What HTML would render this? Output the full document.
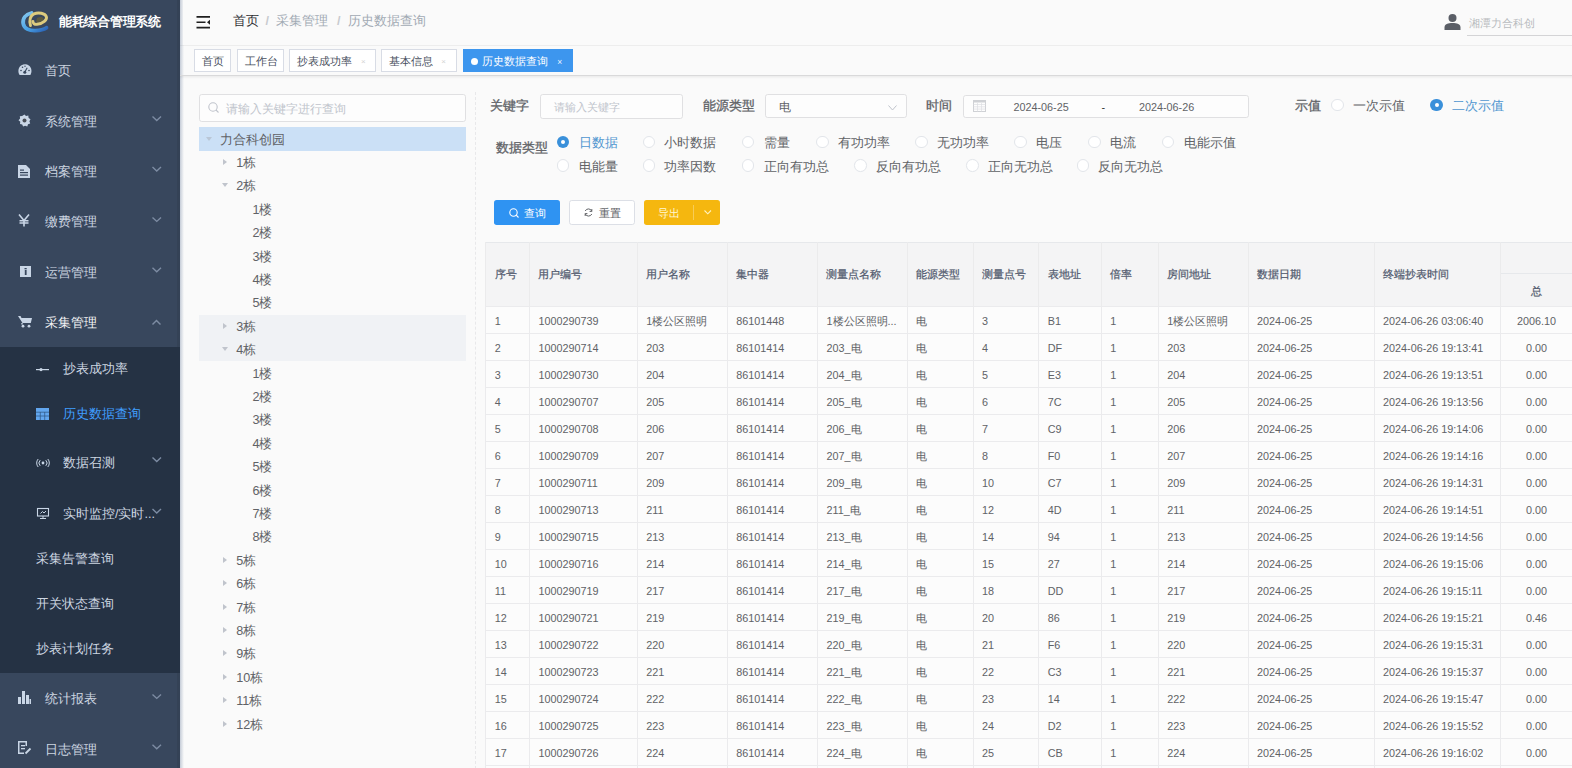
<!DOCTYPE html>
<html><head><meta charset="utf-8"><title>历史数据查询</title>
<style>
*{box-sizing:border-box;margin:0;padding:0}
html,body{width:1572px;height:768px;overflow:hidden;background:#fafafa;font-family:'Liberation Sans', sans-serif}
.t{position:absolute;white-space:nowrap;line-height:20px}
.r{position:absolute}
svg{position:absolute;overflow:visible}
</style></head>
<body>
<div class="r" style="left:0px;top:0px;width:180px;height:768px;background:#38475d"></div>
<div class="r" style="left:0px;top:346.8px;width:180px;height:326.5px;background:#253244"></div>
<div class="r" style="left:177px;top:0px;width:3px;height:346.8px;background:rgba(0,0,0,.07)"></div>
<div class="r" style="left:177px;top:673.3px;width:3px;height:95px;background:rgba(0,0,0,.07)"></div>
<div class="r" style="left:180px;top:0px;width:4px;height:768px;background:linear-gradient(to right,rgba(60,85,125,.28),rgba(60,85,125,0))"></div>
<svg style="left:0;top:0" width="60" height="40" viewBox="0 0 60 40">
<defs><linearGradient id="lg1" x1="0" y1="0" x2="1" y2="1"><stop offset="0" stop-color="#86c8ee"/><stop offset=".55" stop-color="#4aa2e4"/><stop offset="1" stop-color="#2a62b5"/></linearGradient></defs>
<path d="M31.5 13 C25.5 14.5 22.5 18.5 23.2 23.5 C24 28.5 29.5 31 35.5 30.6 C40 30.3 44 29.3 46.5 27.8" fill="none" stroke="url(#lg1)" stroke-width="3.8" stroke-linecap="round"/>
<path d="M37 18 C40 16.5 43 17 43.5 18.5 C44 20.5 40 22.5 36 22.5 Z" fill="#5c5a3c"/>
<path d="M30.5 25.5 C29 21 30 15.5 34 13.8 C38.5 12 45 13.2 46.3 16.5 C47.5 19.8 43 23.8 37 24.3 C34.5 24.5 32.8 23.5 33 21.5" fill="none" stroke="#dccb7e" stroke-width="2.9" stroke-linecap="round"/>
</svg>
<div class="t" style="left:59px;top:12.00px;font-size:12.6px;color:#ffffff;font-weight:bold;letter-spacing:-0.3px">能耗综合管理系统</div>
<div class="t" style="left:45px;top:61.20px;font-size:12.6px;color:#cdd6e1;font-weight:normal;">首页</div>
<div class="t" style="left:45px;top:111.60px;font-size:12.6px;color:#cdd6e1;font-weight:normal;">系统管理</div>
<svg style="left:0;top:0" width="1" height="1"><path d="M152.5 116.6 L156.75 120.6 L161 116.6" fill="none" stroke="#7d8ca3" stroke-width="1.4"/></svg>
<div class="t" style="left:45px;top:162.00px;font-size:12.6px;color:#cdd6e1;font-weight:normal;">档案管理</div>
<svg style="left:0;top:0" width="1" height="1"><path d="M152.5 167 L156.75 171 L161 167" fill="none" stroke="#7d8ca3" stroke-width="1.4"/></svg>
<div class="t" style="left:45px;top:212.40px;font-size:12.6px;color:#cdd6e1;font-weight:normal;">缴费管理</div>
<svg style="left:0;top:0" width="1" height="1"><path d="M152.5 217.4 L156.75 221.4 L161 217.4" fill="none" stroke="#7d8ca3" stroke-width="1.4"/></svg>
<div class="t" style="left:45px;top:262.80px;font-size:12.6px;color:#cdd6e1;font-weight:normal;">运营管理</div>
<svg style="left:0;top:0" width="1" height="1"><path d="M152.5 267.8 L156.75 271.8 L161 267.8" fill="none" stroke="#7d8ca3" stroke-width="1.4"/></svg>
<div class="t" style="left:45px;top:313.20px;font-size:12.6px;color:#f4f4f5;font-weight:normal;">采集管理</div>
<svg style="left:0;top:0" width="1" height="1"><path d="M152.5 324.5 L156.5 320.4 L160.5 324.5" fill="none" stroke="#7d8ca3" stroke-width="1.4"/></svg>
<div class="t" style="left:45px;top:689.40px;font-size:12.6px;color:#cdd6e1;font-weight:normal;">统计报表</div>
<svg style="left:0;top:0" width="1" height="1"><path d="M152.5 694.4 L156.75 698.4 L161 694.4" fill="none" stroke="#7d8ca3" stroke-width="1.4"/></svg>
<div class="t" style="left:45px;top:739.80px;font-size:12.6px;color:#cdd6e1;font-weight:normal;">日志管理</div>
<svg style="left:0;top:0" width="1" height="1"><path d="M152.5 744.8 L156.75 748.8 L161 744.8" fill="none" stroke="#7d8ca3" stroke-width="1.4"/></svg>
<div class="t" style="left:63px;top:359.40px;font-size:12.6px;color:#cdd6e1;font-weight:normal;">抄表成功率</div>
<div class="t" style="left:63px;top:404.40px;font-size:12.6px;color:#409EFF;font-weight:normal;">历史数据查询</div>
<div class="t" style="left:63px;top:452.60px;font-size:12.6px;color:#cdd6e1;font-weight:normal;">数据召测</div>
<svg style="left:0;top:0" width="1" height="1"><path d="M152.5 457.6 L156.75 461.6 L161 457.6" fill="none" stroke="#7d8ca3" stroke-width="1.4"/></svg>
<div class="t" style="left:63px;top:504.00px;font-size:12.6px;color:#cdd6e1;font-weight:normal;">实时监控/实时...</div>
<svg style="left:0;top:0" width="1" height="1"><path d="M152.5 509 L156.75 513 L161 509" fill="none" stroke="#7d8ca3" stroke-width="1.4"/></svg>
<div class="t" style="left:35.5px;top:549.40px;font-size:12.6px;color:#cdd6e1;font-weight:normal;">采集告警查询</div>
<div class="t" style="left:35.5px;top:594.40px;font-size:12.6px;color:#cdd6e1;font-weight:normal;">开关状态查询</div>
<div class="t" style="left:35.5px;top:639.40px;font-size:12.6px;color:#cdd6e1;font-weight:normal;">抄表计划任务</div>
<svg style="left:17.5px;top:63.5px" width="14" height="12" viewBox="0 0 14 12">
<path d="M1.6 11 C-0.5 8 0.3 3 3.5 1.3 C5.8 0 8.8 0 10.8 1.5 C13.8 3.5 14.3 8 12.4 11 Z" fill="#c9d6e6"/>
<circle cx="6.8" cy="8.2" r="1.5" fill="#38475d"/><path d="M6.8 8 L9.2 3.8" stroke="#38475d" stroke-width="1.1"/>
<circle cx="3" cy="6.5" r=".8" fill="#38475d"/><circle cx="4.5" cy="3.3" r=".8" fill="#38475d"/><circle cx="11" cy="6.5" r=".8" fill="#38475d"/><circle cx="7" cy="2.3" r=".7" fill="#38475d"/>
</svg>
<svg style="left:17.5px;top:113.5px" width="13" height="13" viewBox="0 0 13 13">
<path d="M6.5 0.5 L8 2 L10.3 1.6 L10.6 3.9 L12.5 5.3 L11.4 7.3 L12.2 9.5 L10 10.3 L9.3 12.5 L7.1 11.7 L5.1 12.6 L4.2 10.4 L2 10 L2.3 7.7 L0.5 6.2 L2.1 4.6 L1.8 2.3 L4.1 2.1 Z" fill="#c9d6e6"/>
<circle cx="6.5" cy="6.5" r="2" fill="#4a4f57"/>
</svg>
<svg style="left:18px;top:164.5px" width="12" height="13" viewBox="0 0 12 13">
<path d="M0 0 H8 L12 4 V13 H0 Z" fill="#c9d6e6"/>
<rect x="2" y="7" width="8" height="1.2" fill="#38475d"/><rect x="2" y="9.5" width="8" height="1.2" fill="#38475d"/><rect x="2" y="4.5" width="4" height="1.2" fill="#38475d"/>
</svg>
<svg style="left:18px;top:214px" width="12" height="13" viewBox="0 0 12 13">
<path d="M1 0.5 L6 6.5 L11 0.5 M6 6.5 V12.5 M1.5 6.8 H10.5 M1.5 9 H10.5" fill="none" stroke="#c9d6e6" stroke-width="1.6"/>
</svg>
<svg style="left:19.5px;top:266px" width="11" height="11" viewBox="0 0 11 11">
<rect x="0" y="0" width="11" height="11" fill="#c9d6e6"/>
<rect x="4.5" y="2" width="2.2" height="1.3" fill="#38475d"/><rect x="4.8" y="4" width="1.8" height="5" fill="#38475d"/>
</svg>
<svg style="left:17.5px;top:315px" width="14" height="13" viewBox="0 0 14 13">
<path d="M0 1 H2.5 L3.5 3 H14 L12.8 8 H4.5 Z" fill="#c9d6e6"/><rect x="3.3" y="8" width="1.4" height="1.5" fill="#c9d6e6"/>
<circle cx="5" cy="11.2" r="1.4" fill="#c9d6e6"/><circle cx="11" cy="11.2" r="1.4" fill="#c9d6e6"/>
</svg>
<svg style="left:18px;top:690.5px" width="13" height="13" viewBox="0 0 13 13">
<rect x="0" y="6" width="3" height="7" fill="#c9d6e6"/><rect x="4" y="0" width="3" height="13" fill="#c9d6e6"/><rect x="8" y="4" width="3" height="9" fill="#c9d6e6"/><rect x="11.5" y="8" width="1.5" height="5" fill="#c9d6e6"/>
</svg>
<svg style="left:18px;top:741px" width="13" height="13" viewBox="0 0 13 13">
<path d="M0 0 H9 V5 H7.5 V1.5 H1.5 V11.5 H6 V13 H0 Z" fill="#c9d6e6"/><rect x="3" y="4" width="4" height="1.3" fill="#c9d6e6"/><rect x="3" y="7" width="4" height="1.3" fill="#c9d6e6"/>
<path d="M7.5 12.5 L12.5 7.5" stroke="#c9d6e6" stroke-width="1.8"/>
</svg>
<svg style="left:36px;top:366.5px" width="13" height="5" viewBox="0 0 13 5">
<rect x="0" y="2" width="13" height="1.2" fill="#c9d6e6"/><circle cx="5" cy="2.6" r="1.6" fill="#c9d6e6"/>
</svg>
<svg style="left:35.8px;top:408px" width="13" height="12" viewBox="0 0 13 12">
<rect x="0" y="0" width="13" height="12" fill="#62a6ee"/>
<path d="M0 4.2 H13 M0 8 H13 M4.3 4 V12 M8.7 4 V12" stroke="#2f5580" stroke-width=".7"/>
</svg>
<svg style="left:36.5px;top:458.5px" width="12" height="8" viewBox="0 0 12 8">
<circle cx="6" cy="4" r="1.4" fill="#c9d6e6"/>
<path d="M3.2 1.2 A4 4 0 0 0 3.2 6.8 M8.8 1.2 A4 4 0 0 1 8.8 6.8 M1.2 0 A6 6 0 0 0 1.2 8 M10.8 0 A6 6 0 0 1 10.8 8" fill="none" stroke="#c9d6e6" stroke-width="1"/>
</svg>
<svg style="left:36.5px;top:507.5px" width="12" height="11" viewBox="0 0 12 11">
<rect x=".5" y=".5" width="11" height="7.5" fill="none" stroke="#c9d6e6" stroke-width="1.1"/>
<path d="M3 10.5 H9 M6 8 V10.5 M3.5 5.5 L5.5 3.5 L7 5 L9 3" fill="none" stroke="#c9d6e6" stroke-width="1"/>
</svg>
<div class="r" style="left:183px;top:0px;width:1389px;height:45px;background:#fafafa"></div>
<div class="r" style="left:180px;top:44.8px;width:1392px;height:1.5px;background:rgba(0,0,0,.05)"></div>
<svg style="left:195.5px;top:15.5px" width="15" height="13" viewBox="0 0 15 13">
<path d="M.5 .9 H14 M.5 6.3 H9.5 M.5 11.6 H14" stroke="#1f1f1f" stroke-width="1.6"/>
<path d="M14 3.8 L11 6.3 L14 8.8 Z" fill="#1f1f1f"/>
</svg>
<div class="t" style="left:233px;top:11.30px;font-size:12.6px;color:#303133;font-weight:normal;">首页</div>
<div class="t" style="left:265.5px;top:11.30px;font-size:12.6px;color:#c8cacf;font-weight:bold;">/</div>
<div class="t" style="left:276px;top:11.30px;font-size:12.6px;color:#a2aab4;font-weight:normal;">采集管理</div>
<div class="t" style="left:337px;top:11.30px;font-size:12.6px;color:#c8cacf;font-weight:bold;">/</div>
<div class="t" style="left:347.5px;top:11.30px;font-size:12.6px;color:#a2aab4;font-weight:normal;">历史数据查询</div>
<svg style="left:1444px;top:14px" width="17" height="16" viewBox="0 0 17 16">
<ellipse cx="8.5" cy="4" rx="4" ry="4" fill="#5a5e66"/>
<path d="M0.5 16 V13.5 C0.5 10 4 9 8.5 9 C13 9 16.5 10 16.5 13.5 V16 Z" fill="#5a5e66"/>
</svg>
<div class="t" style="left:1469px;top:13.00px;font-size:10.8px;color:#b8babe;font-weight:normal;">湘潭力合科创</div>
<div class="r" style="left:1467px;top:35px;width:105px;height:1px;background:#d4d4d6"></div>
<div class="r" style="left:180px;top:75px;width:1392px;height:1.2px;background:#d9d9da"></div>
<div class="r" style="left:180px;top:76.2px;width:1392px;height:2.5px;background:linear-gradient(rgba(0,0,0,.06),rgba(0,0,0,0))"></div>
<div class="r" style="left:194px;top:49px;width:36.5px;height:23px;background:#fff;border:1px solid #d8dce5"></div>
<div class="t" style="left:202px;top:51.30px;font-size:10.8px;color:#495060;font-weight:normal;">首页</div>
<div class="r" style="left:236.5px;top:49px;width:47.89999999999998px;height:23px;background:#fff;border:1px solid #d8dce5"></div>
<div class="t" style="left:244.5px;top:51.30px;font-size:10.8px;color:#495060;font-weight:normal;">工作台</div>
<div class="r" style="left:289.4px;top:49px;width:87.10000000000002px;height:23px;background:#fff;border:1px solid #d8dce5"></div>
<div class="t" style="left:297.4px;top:51.30px;font-size:10.8px;color:#495060;font-weight:normal;">抄表成功率</div>
<div class="t" style="left:361.0px;top:52.00px;font-size:8px;color:#d4d4d4;font-weight:normal;">×</div>
<div class="r" style="left:381.3px;top:49px;width:75.5px;height:23px;background:#fff;border:1px solid #d8dce5"></div>
<div class="t" style="left:389.3px;top:51.30px;font-size:10.8px;color:#495060;font-weight:normal;">基本信息</div>
<div class="t" style="left:441.3px;top:52.00px;font-size:8px;color:#d4d4d4;font-weight:normal;">×</div>
<div class="r" style="left:463.2px;top:49px;width:109.59999999999997px;height:23px;background:#3d96ee;border:1px solid #3d96ee"></div>
<div class="r" style="left:471.2px;top:57.5px;width:7px;height:7px;background:#fff;border-radius:50%"></div>
<div class="t" style="left:482.2px;top:51.30px;font-size:10.8px;color:#fff;font-weight:normal;">历史数据查询</div>
<div class="t" style="left:557.3px;top:52.00px;font-size:8.5px;color:#e8f3ff;font-weight:normal;">×</div>
<div class="r" style="left:198.5px;top:94px;width:267px;height:28px;background:#fdfdfd;border:1px solid #e0e0e2;border-radius:2.7px"></div>
<svg style="left:208px;top:102px" width="11" height="11" viewBox="0 0 11 11">
<circle cx="5" cy="5" r="4.2" fill="none" stroke="#c0c4cc" stroke-width="1.1"/><path d="M8 8 L10.5 10.5" stroke="#c0c4cc" stroke-width="1.1"/>
</svg>
<div class="t" style="left:225.5px;top:98.50px;font-size:11.7px;color:#c0c4cc;font-weight:normal;">请输入关键字进行查询</div>
<div class="r" style="left:198.5px;top:127.3px;width:267px;height:23.4px;background:#cbe0f6"></div>
<div class="r" style="left:198.5px;top:314.5px;width:267px;height:46.8px;background:#f0f2f5"></div>
<svg style="left:206.0px;top:136.5px" width="6" height="4"><path d="M0 0 H6 L3 4 Z" fill="#b9c6d6"/></svg>
<div class="t" style="left:220.0px;top:129.50px;font-size:12.6px;color:#606266;font-weight:normal;">力合科创园</div>
<svg style="left:223.2px;top:158.89999999999998px" width="4" height="6"><path d="M0 0 V6 L4 3 Z" fill="#c0c4cc"/></svg>
<div class="t" style="left:236.2px;top:152.90px;font-size:12.6px;color:#606266;font-weight:normal;">1栋</div>
<svg style="left:222.2px;top:183.29999999999998px" width="6" height="4"><path d="M0 0 H6 L3 4 Z" fill="#c0c4cc"/></svg>
<div class="t" style="left:236.2px;top:176.30px;font-size:12.6px;color:#606266;font-weight:normal;">2栋</div>
<div class="t" style="left:252.4px;top:199.70px;font-size:12.6px;color:#606266;font-weight:normal;">1楼</div>
<div class="t" style="left:252.4px;top:223.10px;font-size:12.6px;color:#606266;font-weight:normal;">2楼</div>
<div class="t" style="left:252.4px;top:246.50px;font-size:12.6px;color:#606266;font-weight:normal;">3楼</div>
<div class="t" style="left:252.4px;top:269.90px;font-size:12.6px;color:#606266;font-weight:normal;">4楼</div>
<div class="t" style="left:252.4px;top:293.30px;font-size:12.6px;color:#606266;font-weight:normal;">5楼</div>
<svg style="left:223.2px;top:322.7px" width="4" height="6"><path d="M0 0 V6 L4 3 Z" fill="#c0c4cc"/></svg>
<div class="t" style="left:236.2px;top:316.70px;font-size:12.6px;color:#606266;font-weight:normal;">3栋</div>
<svg style="left:222.2px;top:347.09999999999997px" width="6" height="4"><path d="M0 0 H6 L3 4 Z" fill="#c0c4cc"/></svg>
<div class="t" style="left:236.2px;top:340.10px;font-size:12.6px;color:#606266;font-weight:normal;">4栋</div>
<div class="t" style="left:252.4px;top:363.50px;font-size:12.6px;color:#606266;font-weight:normal;">1楼</div>
<div class="t" style="left:252.4px;top:386.90px;font-size:12.6px;color:#606266;font-weight:normal;">2楼</div>
<div class="t" style="left:252.4px;top:410.30px;font-size:12.6px;color:#606266;font-weight:normal;">3楼</div>
<div class="t" style="left:252.4px;top:433.70px;font-size:12.6px;color:#606266;font-weight:normal;">4楼</div>
<div class="t" style="left:252.4px;top:457.10px;font-size:12.6px;color:#606266;font-weight:normal;">5楼</div>
<div class="t" style="left:252.4px;top:480.50px;font-size:12.6px;color:#606266;font-weight:normal;">6楼</div>
<div class="t" style="left:252.4px;top:503.90px;font-size:12.6px;color:#606266;font-weight:normal;">7楼</div>
<div class="t" style="left:252.4px;top:527.30px;font-size:12.6px;color:#606266;font-weight:normal;">8楼</div>
<svg style="left:223.2px;top:556.7px" width="4" height="6"><path d="M0 0 V6 L4 3 Z" fill="#c0c4cc"/></svg>
<div class="t" style="left:236.2px;top:550.70px;font-size:12.6px;color:#606266;font-weight:normal;">5栋</div>
<svg style="left:223.2px;top:580.1px" width="4" height="6"><path d="M0 0 V6 L4 3 Z" fill="#c0c4cc"/></svg>
<div class="t" style="left:236.2px;top:574.10px;font-size:12.6px;color:#606266;font-weight:normal;">6栋</div>
<svg style="left:223.2px;top:603.5px" width="4" height="6"><path d="M0 0 V6 L4 3 Z" fill="#c0c4cc"/></svg>
<div class="t" style="left:236.2px;top:597.50px;font-size:12.6px;color:#606266;font-weight:normal;">7栋</div>
<svg style="left:223.2px;top:626.9px" width="4" height="6"><path d="M0 0 V6 L4 3 Z" fill="#c0c4cc"/></svg>
<div class="t" style="left:236.2px;top:620.90px;font-size:12.6px;color:#606266;font-weight:normal;">8栋</div>
<svg style="left:223.2px;top:650.3px" width="4" height="6"><path d="M0 0 V6 L4 3 Z" fill="#c0c4cc"/></svg>
<div class="t" style="left:236.2px;top:644.30px;font-size:12.6px;color:#606266;font-weight:normal;">9栋</div>
<svg style="left:223.2px;top:673.6999999999999px" width="4" height="6"><path d="M0 0 V6 L4 3 Z" fill="#c0c4cc"/></svg>
<div class="t" style="left:236.2px;top:667.70px;font-size:12.6px;color:#606266;font-weight:normal;">10栋</div>
<svg style="left:223.2px;top:697.0999999999999px" width="4" height="6"><path d="M0 0 V6 L4 3 Z" fill="#c0c4cc"/></svg>
<div class="t" style="left:236.2px;top:691.10px;font-size:12.6px;color:#606266;font-weight:normal;">11栋</div>
<svg style="left:223.2px;top:720.5px" width="4" height="6"><path d="M0 0 V6 L4 3 Z" fill="#c0c4cc"/></svg>
<div class="t" style="left:236.2px;top:714.50px;font-size:12.6px;color:#606266;font-weight:normal;">12栋</div>
<div class="r" style="left:475px;top:91.5px;width:0;height:677px;border-left:1px dashed #e8e8ea"></div>
<div class="t" style="left:490px;top:96.30px;font-size:12.6px;color:#606266;font-weight:normal;-webkit-text-stroke:0.3px #606266">关键字</div>
<div class="r" style="left:539.5px;top:94.2px;width:143.2px;height:24.4px;background:#fdfdfd;border:1px solid #e0e0e2;border-radius:2.7px"></div>
<div class="t" style="left:553.5px;top:96.50px;font-size:10.9px;color:#c0c4cc;font-weight:normal;">请输入关键字</div>
<div class="t" style="left:702.9px;top:96.20px;font-size:12.6px;color:#606266;font-weight:normal;-webkit-text-stroke:0.3px #606266">能源类型</div>
<div class="r" style="left:764.7px;top:94.4px;width:142.6px;height:23.8px;background:#fdfdfd;border:1px solid #e0e0e2;border-radius:2.7px"></div>
<div class="t" style="left:778.5px;top:97.00px;font-size:11.7px;color:#606266;font-weight:normal;">电</div>
<svg style="left:887.5px;top:105px" width="10" height="6"><path d="M.5 .5 L4.5 5 L8.5 .5" fill="none" stroke="#c0c4cc" stroke-width="1"/></svg>
<div class="t" style="left:926px;top:96.20px;font-size:12.6px;color:#606266;font-weight:normal;-webkit-text-stroke:0.3px #606266">时间</div>
<div class="r" style="left:962.8px;top:94.5px;width:286.6px;height:23.6px;background:#fdfdfd;border:1px solid #e0e0e2;border-radius:2.7px"></div>
<svg style="left:972.5px;top:99.5px" width="13" height="12" viewBox="0 0 13 12">
<rect x=".5" y=".5" width="12" height="11" fill="none" stroke="#cfd1d5" stroke-width="1"/><rect x=".5" y=".5" width="12" height="2" fill="#cfd1d5"/>
<path d="M.5 4.5 H12.5 M.5 6.8 H12.5 M.5 9.1 H12.5 M4.5 3 V11.5 M8.5 3 V11.5" stroke="#dcdee2" stroke-width=".7"/>
</svg>
<div class="t" style="left:1013.5px;top:96.50px;font-size:10.8px;color:#606266;font-weight:normal;">2024-06-25</div>
<div class="t" style="left:1101.5px;top:96.50px;font-size:10.8px;color:#303133;font-weight:normal;">-</div>
<div class="t" style="left:1139px;top:96.50px;font-size:10.8px;color:#606266;font-weight:normal;">2024-06-26</div>
<div class="t" style="left:1295.3px;top:96.20px;font-size:12.6px;color:#606266;font-weight:normal;-webkit-text-stroke:0.3px #606266">示值</div>
<div class="r" style="left:1331px;top:98.5px;width:12.6px;height:12.6px;border-radius:50%;background:#fff;border:1px solid #e2e5ea"></div>
<div class="t" style="left:1352.8px;top:95.80px;font-size:12.6px;color:#606266;font-weight:normal;">一次示值</div>
<div class="r" style="left:1430.4px;top:98.5px;width:12.6px;height:12.6px;border-radius:50%;background:#3a90da"></div>
<div class="r" style="left:1434.7px;top:102.8px;width:4px;height:4px;border-radius:50%;background:#fff"></div>
<div class="t" style="left:1452.2px;top:95.80px;font-size:12.6px;color:#5096d0;font-weight:normal;">二次示值</div>
<div class="t" style="left:496px;top:137.70px;font-size:12.6px;color:#606266;font-weight:normal;-webkit-text-stroke:0.3px #606266">数据类型</div>
<div class="r" style="left:556.7px;top:135.5px;width:12.6px;height:12.6px;border-radius:50%;background:#3a90da"></div>
<div class="r" style="left:561.0px;top:139.8px;width:4px;height:4px;border-radius:50%;background:#fff"></div>
<div class="t" style="left:578.5px;top:132.80px;font-size:12.6px;color:#5096d0;font-weight:normal;">日数据</div>
<div class="r" style="left:642.6px;top:135.5px;width:12.6px;height:12.6px;border-radius:50%;background:#fff;border:1px solid #e2e5ea"></div>
<div class="t" style="left:664.4px;top:132.80px;font-size:12.6px;color:#606266;font-weight:normal;">小时数据</div>
<div class="r" style="left:741.8px;top:135.5px;width:12.6px;height:12.6px;border-radius:50%;background:#fff;border:1px solid #e2e5ea"></div>
<div class="t" style="left:763.5999999999999px;top:132.80px;font-size:12.6px;color:#606266;font-weight:normal;">需量</div>
<div class="r" style="left:816.2px;top:135.5px;width:12.6px;height:12.6px;border-radius:50%;background:#fff;border:1px solid #e2e5ea"></div>
<div class="t" style="left:838.0px;top:132.80px;font-size:12.6px;color:#606266;font-weight:normal;">有功功率</div>
<div class="r" style="left:915px;top:135.5px;width:12.6px;height:12.6px;border-radius:50%;background:#fff;border:1px solid #e2e5ea"></div>
<div class="t" style="left:936.8px;top:132.80px;font-size:12.6px;color:#606266;font-weight:normal;">无功功率</div>
<div class="r" style="left:1014.3px;top:135.5px;width:12.6px;height:12.6px;border-radius:50%;background:#fff;border:1px solid #e2e5ea"></div>
<div class="t" style="left:1036.1px;top:132.80px;font-size:12.6px;color:#606266;font-weight:normal;">电压</div>
<div class="r" style="left:1088px;top:135.5px;width:12.6px;height:12.6px;border-radius:50%;background:#fff;border:1px solid #e2e5ea"></div>
<div class="t" style="left:1109.8px;top:132.80px;font-size:12.6px;color:#606266;font-weight:normal;">电流</div>
<div class="r" style="left:1161.9px;top:135.5px;width:12.6px;height:12.6px;border-radius:50%;background:#fff;border:1px solid #e2e5ea"></div>
<div class="t" style="left:1183.7px;top:132.80px;font-size:12.6px;color:#606266;font-weight:normal;">电能示值</div>
<div class="r" style="left:556.7px;top:159.29999999999998px;width:12.6px;height:12.6px;border-radius:50%;background:#fff;border:1px solid #e2e5ea"></div>
<div class="t" style="left:578.5px;top:156.60px;font-size:12.6px;color:#606266;font-weight:normal;">电能量</div>
<div class="r" style="left:642.6px;top:159.29999999999998px;width:12.6px;height:12.6px;border-radius:50%;background:#fff;border:1px solid #e2e5ea"></div>
<div class="t" style="left:664.4px;top:156.60px;font-size:12.6px;color:#606266;font-weight:normal;">功率因数</div>
<div class="r" style="left:741.8px;top:159.29999999999998px;width:12.6px;height:12.6px;border-radius:50%;background:#fff;border:1px solid #e2e5ea"></div>
<div class="t" style="left:763.5999999999999px;top:156.60px;font-size:12.6px;color:#606266;font-weight:normal;">正向有功总</div>
<div class="r" style="left:854px;top:159.29999999999998px;width:12.6px;height:12.6px;border-radius:50%;background:#fff;border:1px solid #e2e5ea"></div>
<div class="t" style="left:875.8px;top:156.60px;font-size:12.6px;color:#606266;font-weight:normal;">反向有功总</div>
<div class="r" style="left:966px;top:159.29999999999998px;width:12.6px;height:12.6px;border-radius:50%;background:#fff;border:1px solid #e2e5ea"></div>
<div class="t" style="left:987.8px;top:156.60px;font-size:12.6px;color:#606266;font-weight:normal;">正向无功总</div>
<div class="r" style="left:1076.6px;top:159.29999999999998px;width:12.6px;height:12.6px;border-radius:50%;background:#fff;border:1px solid #e2e5ea"></div>
<div class="t" style="left:1098.3999999999999px;top:156.60px;font-size:12.6px;color:#606266;font-weight:normal;">反向无功总</div>
<div class="r" style="left:494.2px;top:200.3px;width:65.5px;height:25px;background:#2f93f2;border-radius:2.7px"></div>
<svg style="left:508.5px;top:207.5px" width="10" height="10" viewBox="0 0 10 10"><circle cx="4.5" cy="4.5" r="3.7" fill="none" stroke="#fff" stroke-width="1.1"/><path d="M7.2 7.2 L9.5 9.5" stroke="#fff" stroke-width="1.1"/></svg>
<div class="t" style="left:524px;top:202.50px;font-size:10.8px;color:#fff;font-weight:normal;">查询</div>
<div class="r" style="left:569.3px;top:200.3px;width:65.5px;height:25px;background:#fff;border:1px solid #dcdfe6;border-radius:2.7px"></div>
<svg style="left:584px;top:208px" width="9" height="9" viewBox="0 0 9 9"><path d="M7.8 3.2 A3.6 3.6 0 0 0 1.2 3 M1.2 5.8 A3.6 3.6 0 0 0 7.8 6" fill="none" stroke="#606266" stroke-width="1"/><path d="M7.8 1 V3.4 H5.6 M1.2 8 V5.6 H3.4" fill="none" stroke="#606266" stroke-width="1"/></svg>
<div class="t" style="left:598.7px;top:202.50px;font-size:10.8px;color:#606266;font-weight:normal;">重置</div>
<div class="r" style="left:644px;top:200.3px;width:76px;height:25px;background:#f5b70f;border-radius:2.7px"></div>
<div class="t" style="left:658.3px;top:202.50px;font-size:10.8px;color:#fff7d6;font-weight:normal;">导出</div>
<div class="r" style="left:693px;top:205px;width:1px;height:15px;background:rgba(255,255,255,.3)"></div>
<svg style="left:704px;top:209.5px" width="8" height="5"><path d="M.5 .5 L3.75 3.8 L7 .5" fill="none" stroke="#fff2c0" stroke-width="1.1"/></svg>
<div class="r" style="left:485.7px;top:242.3px;width:1086.3px;height:525.7px;background:#fcfcfc"></div>
<div class="r" style="left:485.7px;top:242.3px;width:1086.3px;height:63.89999999999998px;background:#f4f4f5"></div>
<div class="r" style="left:485.7px;top:242.3px;width:1086.3px;height:1px;background:#e6e8eb"></div>
<div class="r" style="left:1500.4px;top:273.2px;width:72px;height:1px;background:#e6e8eb"></div>
<div class="r" style="left:485.7px;top:306.2px;width:1086.3px;height:1px;background:#ebebed"></div>
<div class="r" style="left:485.7px;top:333.2px;width:1086.3px;height:1px;background:#ebebed"></div>
<div class="r" style="left:485.7px;top:360.2px;width:1086.3px;height:1px;background:#ebebed"></div>
<div class="r" style="left:485.7px;top:387.2px;width:1086.3px;height:1px;background:#ebebed"></div>
<div class="r" style="left:485.7px;top:414.2px;width:1086.3px;height:1px;background:#ebebed"></div>
<div class="r" style="left:485.7px;top:441.2px;width:1086.3px;height:1px;background:#ebebed"></div>
<div class="r" style="left:485.7px;top:468.2px;width:1086.3px;height:1px;background:#ebebed"></div>
<div class="r" style="left:485.7px;top:495.2px;width:1086.3px;height:1px;background:#ebebed"></div>
<div class="r" style="left:485.7px;top:522.2px;width:1086.3px;height:1px;background:#ebebed"></div>
<div class="r" style="left:485.7px;top:549.2px;width:1086.3px;height:1px;background:#ebebed"></div>
<div class="r" style="left:485.7px;top:576.2px;width:1086.3px;height:1px;background:#ebebed"></div>
<div class="r" style="left:485.7px;top:603.2px;width:1086.3px;height:1px;background:#ebebed"></div>
<div class="r" style="left:485.7px;top:630.2px;width:1086.3px;height:1px;background:#ebebed"></div>
<div class="r" style="left:485.7px;top:657.2px;width:1086.3px;height:1px;background:#ebebed"></div>
<div class="r" style="left:485.7px;top:684.2px;width:1086.3px;height:1px;background:#ebebed"></div>
<div class="r" style="left:485.7px;top:711.2px;width:1086.3px;height:1px;background:#ebebed"></div>
<div class="r" style="left:485.7px;top:738.2px;width:1086.3px;height:1px;background:#ebebed"></div>
<div class="r" style="left:485.7px;top:765.2px;width:1086.3px;height:1px;background:#ebebed"></div>
<div class="r" style="left:485.2px;top:242.3px;width:1px;height:63.599999999999966px;background:#ebebec"></div>
<div class="r" style="left:485.2px;top:305.9px;width:1px;height:462.1px;background:#ebebed"></div>
<div class="r" style="left:529.0px;top:242.3px;width:1px;height:63.599999999999966px;background:#ebebec"></div>
<div class="r" style="left:529.0px;top:305.9px;width:1px;height:462.1px;background:#ebebed"></div>
<div class="r" style="left:636.7px;top:242.3px;width:1px;height:63.599999999999966px;background:#ebebec"></div>
<div class="r" style="left:636.7px;top:305.9px;width:1px;height:462.1px;background:#ebebed"></div>
<div class="r" style="left:726.8px;top:242.3px;width:1px;height:63.599999999999966px;background:#ebebec"></div>
<div class="r" style="left:726.8px;top:305.9px;width:1px;height:462.1px;background:#ebebed"></div>
<div class="r" style="left:817.1px;top:242.3px;width:1px;height:63.599999999999966px;background:#ebebec"></div>
<div class="r" style="left:817.1px;top:305.9px;width:1px;height:462.1px;background:#ebebed"></div>
<div class="r" style="left:906.7px;top:242.3px;width:1px;height:63.599999999999966px;background:#ebebec"></div>
<div class="r" style="left:906.7px;top:305.9px;width:1px;height:462.1px;background:#ebebed"></div>
<div class="r" style="left:972.5px;top:242.3px;width:1px;height:63.599999999999966px;background:#ebebec"></div>
<div class="r" style="left:972.5px;top:305.9px;width:1px;height:462.1px;background:#ebebed"></div>
<div class="r" style="left:1038.2px;top:242.3px;width:1px;height:63.599999999999966px;background:#ebebec"></div>
<div class="r" style="left:1038.2px;top:305.9px;width:1px;height:462.1px;background:#ebebed"></div>
<div class="r" style="left:1100.7px;top:242.3px;width:1px;height:63.599999999999966px;background:#ebebec"></div>
<div class="r" style="left:1100.7px;top:305.9px;width:1px;height:462.1px;background:#ebebed"></div>
<div class="r" style="left:1157.7px;top:242.3px;width:1px;height:63.599999999999966px;background:#ebebec"></div>
<div class="r" style="left:1157.7px;top:305.9px;width:1px;height:462.1px;background:#ebebed"></div>
<div class="r" style="left:1247.5px;top:242.3px;width:1px;height:63.599999999999966px;background:#ebebec"></div>
<div class="r" style="left:1247.5px;top:305.9px;width:1px;height:462.1px;background:#ebebed"></div>
<div class="r" style="left:1373.6px;top:242.3px;width:1px;height:63.599999999999966px;background:#ebebec"></div>
<div class="r" style="left:1373.6px;top:305.9px;width:1px;height:462.1px;background:#ebebed"></div>
<div class="r" style="left:1499.9px;top:242.3px;width:1px;height:63.599999999999966px;background:#ebebec"></div>
<div class="r" style="left:1499.9px;top:305.9px;width:1px;height:462.1px;background:#ebebed"></div>
<div class="t" style="left:494.5px;top:263.50px;font-size:10.8px;color:#515a6e;font-weight:normal;-webkit-text-stroke:0.22px #515a6e">序号</div>
<div class="t" style="left:538.3px;top:263.50px;font-size:10.8px;color:#515a6e;font-weight:normal;-webkit-text-stroke:0.22px #515a6e">用户编号</div>
<div class="t" style="left:646.0px;top:263.50px;font-size:10.8px;color:#515a6e;font-weight:normal;-webkit-text-stroke:0.22px #515a6e">用户名称</div>
<div class="t" style="left:736.0999999999999px;top:263.50px;font-size:10.8px;color:#515a6e;font-weight:normal;-webkit-text-stroke:0.22px #515a6e">集中器</div>
<div class="t" style="left:826.4px;top:263.50px;font-size:10.8px;color:#515a6e;font-weight:normal;-webkit-text-stroke:0.22px #515a6e">测量点名称</div>
<div class="t" style="left:916.0px;top:263.50px;font-size:10.8px;color:#515a6e;font-weight:normal;-webkit-text-stroke:0.22px #515a6e">能源类型</div>
<div class="t" style="left:981.8px;top:263.50px;font-size:10.8px;color:#515a6e;font-weight:normal;-webkit-text-stroke:0.22px #515a6e">测量点号</div>
<div class="t" style="left:1047.5px;top:263.50px;font-size:10.8px;color:#515a6e;font-weight:normal;-webkit-text-stroke:0.22px #515a6e">表地址</div>
<div class="t" style="left:1110.0px;top:263.50px;font-size:10.8px;color:#515a6e;font-weight:normal;-webkit-text-stroke:0.22px #515a6e">倍率</div>
<div class="t" style="left:1167.0px;top:263.50px;font-size:10.8px;color:#515a6e;font-weight:normal;-webkit-text-stroke:0.22px #515a6e">房间地址</div>
<div class="t" style="left:1256.8px;top:263.50px;font-size:10.8px;color:#515a6e;font-weight:normal;-webkit-text-stroke:0.22px #515a6e">数据日期</div>
<div class="t" style="left:1382.8999999999999px;top:263.50px;font-size:10.8px;color:#515a6e;font-weight:normal;-webkit-text-stroke:0.22px #515a6e">终端抄表时间</div>
<div class="t" style="left:1531.3px;top:280.80px;font-size:10.8px;color:#515a6e;font-weight:normal;-webkit-text-stroke:0.22px #515a6e">总</div>
<div class="t" style="left:494.7px;top:311.40px;font-size:10.8px;color:#606266;font-weight:normal;">1</div>
<div class="t" style="left:538.5px;top:311.40px;font-size:10.8px;color:#606266;font-weight:normal;">1000290739</div>
<div class="t" style="left:646.2px;top:311.40px;font-size:10.8px;color:#606266;font-weight:normal;">1楼公区照明</div>
<div class="t" style="left:736.3px;top:311.40px;font-size:10.8px;color:#606266;font-weight:normal;">86101448</div>
<div class="t" style="left:826.6px;top:311.40px;font-size:10.8px;color:#606266;font-weight:normal;">1楼公区照明...</div>
<div class="t" style="left:916.2px;top:311.40px;font-size:10.8px;color:#606266;font-weight:normal;">电</div>
<div class="t" style="left:982px;top:311.40px;font-size:10.8px;color:#606266;font-weight:normal;">3</div>
<div class="t" style="left:1047.7px;top:311.40px;font-size:10.8px;color:#606266;font-weight:normal;">B1</div>
<div class="t" style="left:1110.2px;top:311.40px;font-size:10.8px;color:#606266;font-weight:normal;">1</div>
<div class="t" style="left:1167.2px;top:311.40px;font-size:10.8px;color:#606266;font-weight:normal;">1楼公区照明</div>
<div class="t" style="left:1257px;top:311.40px;font-size:10.8px;color:#606266;font-weight:normal;">2024-06-25</div>
<div class="t" style="left:1383.1px;top:311.40px;font-size:10.8px;color:#606266;font-weight:normal;">2024-06-26 03:06:40</div>
<div class="t" style="left:1501.2px;width:70.8px;text-align:center;top:311.40px;font-size:10.8px;color:#606266">2006.10</div>
<div class="t" style="left:494.7px;top:338.40px;font-size:10.8px;color:#606266;font-weight:normal;">2</div>
<div class="t" style="left:538.5px;top:338.40px;font-size:10.8px;color:#606266;font-weight:normal;">1000290714</div>
<div class="t" style="left:646.2px;top:338.40px;font-size:10.8px;color:#606266;font-weight:normal;">203</div>
<div class="t" style="left:736.3px;top:338.40px;font-size:10.8px;color:#606266;font-weight:normal;">86101414</div>
<div class="t" style="left:826.6px;top:338.40px;font-size:10.8px;color:#606266;font-weight:normal;">203_电</div>
<div class="t" style="left:916.2px;top:338.40px;font-size:10.8px;color:#606266;font-weight:normal;">电</div>
<div class="t" style="left:982px;top:338.40px;font-size:10.8px;color:#606266;font-weight:normal;">4</div>
<div class="t" style="left:1047.7px;top:338.40px;font-size:10.8px;color:#606266;font-weight:normal;">DF</div>
<div class="t" style="left:1110.2px;top:338.40px;font-size:10.8px;color:#606266;font-weight:normal;">1</div>
<div class="t" style="left:1167.2px;top:338.40px;font-size:10.8px;color:#606266;font-weight:normal;">203</div>
<div class="t" style="left:1257px;top:338.40px;font-size:10.8px;color:#606266;font-weight:normal;">2024-06-25</div>
<div class="t" style="left:1383.1px;top:338.40px;font-size:10.8px;color:#606266;font-weight:normal;">2024-06-26 19:13:41</div>
<div class="t" style="left:1501.2px;width:70.8px;text-align:center;top:338.40px;font-size:10.8px;color:#606266">0.00</div>
<div class="t" style="left:494.7px;top:365.40px;font-size:10.8px;color:#606266;font-weight:normal;">3</div>
<div class="t" style="left:538.5px;top:365.40px;font-size:10.8px;color:#606266;font-weight:normal;">1000290730</div>
<div class="t" style="left:646.2px;top:365.40px;font-size:10.8px;color:#606266;font-weight:normal;">204</div>
<div class="t" style="left:736.3px;top:365.40px;font-size:10.8px;color:#606266;font-weight:normal;">86101414</div>
<div class="t" style="left:826.6px;top:365.40px;font-size:10.8px;color:#606266;font-weight:normal;">204_电</div>
<div class="t" style="left:916.2px;top:365.40px;font-size:10.8px;color:#606266;font-weight:normal;">电</div>
<div class="t" style="left:982px;top:365.40px;font-size:10.8px;color:#606266;font-weight:normal;">5</div>
<div class="t" style="left:1047.7px;top:365.40px;font-size:10.8px;color:#606266;font-weight:normal;">E3</div>
<div class="t" style="left:1110.2px;top:365.40px;font-size:10.8px;color:#606266;font-weight:normal;">1</div>
<div class="t" style="left:1167.2px;top:365.40px;font-size:10.8px;color:#606266;font-weight:normal;">204</div>
<div class="t" style="left:1257px;top:365.40px;font-size:10.8px;color:#606266;font-weight:normal;">2024-06-25</div>
<div class="t" style="left:1383.1px;top:365.40px;font-size:10.8px;color:#606266;font-weight:normal;">2024-06-26 19:13:51</div>
<div class="t" style="left:1501.2px;width:70.8px;text-align:center;top:365.40px;font-size:10.8px;color:#606266">0.00</div>
<div class="t" style="left:494.7px;top:392.40px;font-size:10.8px;color:#606266;font-weight:normal;">4</div>
<div class="t" style="left:538.5px;top:392.40px;font-size:10.8px;color:#606266;font-weight:normal;">1000290707</div>
<div class="t" style="left:646.2px;top:392.40px;font-size:10.8px;color:#606266;font-weight:normal;">205</div>
<div class="t" style="left:736.3px;top:392.40px;font-size:10.8px;color:#606266;font-weight:normal;">86101414</div>
<div class="t" style="left:826.6px;top:392.40px;font-size:10.8px;color:#606266;font-weight:normal;">205_电</div>
<div class="t" style="left:916.2px;top:392.40px;font-size:10.8px;color:#606266;font-weight:normal;">电</div>
<div class="t" style="left:982px;top:392.40px;font-size:10.8px;color:#606266;font-weight:normal;">6</div>
<div class="t" style="left:1047.7px;top:392.40px;font-size:10.8px;color:#606266;font-weight:normal;">7C</div>
<div class="t" style="left:1110.2px;top:392.40px;font-size:10.8px;color:#606266;font-weight:normal;">1</div>
<div class="t" style="left:1167.2px;top:392.40px;font-size:10.8px;color:#606266;font-weight:normal;">205</div>
<div class="t" style="left:1257px;top:392.40px;font-size:10.8px;color:#606266;font-weight:normal;">2024-06-25</div>
<div class="t" style="left:1383.1px;top:392.40px;font-size:10.8px;color:#606266;font-weight:normal;">2024-06-26 19:13:56</div>
<div class="t" style="left:1501.2px;width:70.8px;text-align:center;top:392.40px;font-size:10.8px;color:#606266">0.00</div>
<div class="t" style="left:494.7px;top:419.40px;font-size:10.8px;color:#606266;font-weight:normal;">5</div>
<div class="t" style="left:538.5px;top:419.40px;font-size:10.8px;color:#606266;font-weight:normal;">1000290708</div>
<div class="t" style="left:646.2px;top:419.40px;font-size:10.8px;color:#606266;font-weight:normal;">206</div>
<div class="t" style="left:736.3px;top:419.40px;font-size:10.8px;color:#606266;font-weight:normal;">86101414</div>
<div class="t" style="left:826.6px;top:419.40px;font-size:10.8px;color:#606266;font-weight:normal;">206_电</div>
<div class="t" style="left:916.2px;top:419.40px;font-size:10.8px;color:#606266;font-weight:normal;">电</div>
<div class="t" style="left:982px;top:419.40px;font-size:10.8px;color:#606266;font-weight:normal;">7</div>
<div class="t" style="left:1047.7px;top:419.40px;font-size:10.8px;color:#606266;font-weight:normal;">C9</div>
<div class="t" style="left:1110.2px;top:419.40px;font-size:10.8px;color:#606266;font-weight:normal;">1</div>
<div class="t" style="left:1167.2px;top:419.40px;font-size:10.8px;color:#606266;font-weight:normal;">206</div>
<div class="t" style="left:1257px;top:419.40px;font-size:10.8px;color:#606266;font-weight:normal;">2024-06-25</div>
<div class="t" style="left:1383.1px;top:419.40px;font-size:10.8px;color:#606266;font-weight:normal;">2024-06-26 19:14:06</div>
<div class="t" style="left:1501.2px;width:70.8px;text-align:center;top:419.40px;font-size:10.8px;color:#606266">0.00</div>
<div class="t" style="left:494.7px;top:446.40px;font-size:10.8px;color:#606266;font-weight:normal;">6</div>
<div class="t" style="left:538.5px;top:446.40px;font-size:10.8px;color:#606266;font-weight:normal;">1000290709</div>
<div class="t" style="left:646.2px;top:446.40px;font-size:10.8px;color:#606266;font-weight:normal;">207</div>
<div class="t" style="left:736.3px;top:446.40px;font-size:10.8px;color:#606266;font-weight:normal;">86101414</div>
<div class="t" style="left:826.6px;top:446.40px;font-size:10.8px;color:#606266;font-weight:normal;">207_电</div>
<div class="t" style="left:916.2px;top:446.40px;font-size:10.8px;color:#606266;font-weight:normal;">电</div>
<div class="t" style="left:982px;top:446.40px;font-size:10.8px;color:#606266;font-weight:normal;">8</div>
<div class="t" style="left:1047.7px;top:446.40px;font-size:10.8px;color:#606266;font-weight:normal;">F0</div>
<div class="t" style="left:1110.2px;top:446.40px;font-size:10.8px;color:#606266;font-weight:normal;">1</div>
<div class="t" style="left:1167.2px;top:446.40px;font-size:10.8px;color:#606266;font-weight:normal;">207</div>
<div class="t" style="left:1257px;top:446.40px;font-size:10.8px;color:#606266;font-weight:normal;">2024-06-25</div>
<div class="t" style="left:1383.1px;top:446.40px;font-size:10.8px;color:#606266;font-weight:normal;">2024-06-26 19:14:16</div>
<div class="t" style="left:1501.2px;width:70.8px;text-align:center;top:446.40px;font-size:10.8px;color:#606266">0.00</div>
<div class="t" style="left:494.7px;top:473.40px;font-size:10.8px;color:#606266;font-weight:normal;">7</div>
<div class="t" style="left:538.5px;top:473.40px;font-size:10.8px;color:#606266;font-weight:normal;">1000290711</div>
<div class="t" style="left:646.2px;top:473.40px;font-size:10.8px;color:#606266;font-weight:normal;">209</div>
<div class="t" style="left:736.3px;top:473.40px;font-size:10.8px;color:#606266;font-weight:normal;">86101414</div>
<div class="t" style="left:826.6px;top:473.40px;font-size:10.8px;color:#606266;font-weight:normal;">209_电</div>
<div class="t" style="left:916.2px;top:473.40px;font-size:10.8px;color:#606266;font-weight:normal;">电</div>
<div class="t" style="left:982px;top:473.40px;font-size:10.8px;color:#606266;font-weight:normal;">10</div>
<div class="t" style="left:1047.7px;top:473.40px;font-size:10.8px;color:#606266;font-weight:normal;">C7</div>
<div class="t" style="left:1110.2px;top:473.40px;font-size:10.8px;color:#606266;font-weight:normal;">1</div>
<div class="t" style="left:1167.2px;top:473.40px;font-size:10.8px;color:#606266;font-weight:normal;">209</div>
<div class="t" style="left:1257px;top:473.40px;font-size:10.8px;color:#606266;font-weight:normal;">2024-06-25</div>
<div class="t" style="left:1383.1px;top:473.40px;font-size:10.8px;color:#606266;font-weight:normal;">2024-06-26 19:14:31</div>
<div class="t" style="left:1501.2px;width:70.8px;text-align:center;top:473.40px;font-size:10.8px;color:#606266">0.00</div>
<div class="t" style="left:494.7px;top:500.40px;font-size:10.8px;color:#606266;font-weight:normal;">8</div>
<div class="t" style="left:538.5px;top:500.40px;font-size:10.8px;color:#606266;font-weight:normal;">1000290713</div>
<div class="t" style="left:646.2px;top:500.40px;font-size:10.8px;color:#606266;font-weight:normal;">211</div>
<div class="t" style="left:736.3px;top:500.40px;font-size:10.8px;color:#606266;font-weight:normal;">86101414</div>
<div class="t" style="left:826.6px;top:500.40px;font-size:10.8px;color:#606266;font-weight:normal;">211_电</div>
<div class="t" style="left:916.2px;top:500.40px;font-size:10.8px;color:#606266;font-weight:normal;">电</div>
<div class="t" style="left:982px;top:500.40px;font-size:10.8px;color:#606266;font-weight:normal;">12</div>
<div class="t" style="left:1047.7px;top:500.40px;font-size:10.8px;color:#606266;font-weight:normal;">4D</div>
<div class="t" style="left:1110.2px;top:500.40px;font-size:10.8px;color:#606266;font-weight:normal;">1</div>
<div class="t" style="left:1167.2px;top:500.40px;font-size:10.8px;color:#606266;font-weight:normal;">211</div>
<div class="t" style="left:1257px;top:500.40px;font-size:10.8px;color:#606266;font-weight:normal;">2024-06-25</div>
<div class="t" style="left:1383.1px;top:500.40px;font-size:10.8px;color:#606266;font-weight:normal;">2024-06-26 19:14:51</div>
<div class="t" style="left:1501.2px;width:70.8px;text-align:center;top:500.40px;font-size:10.8px;color:#606266">0.00</div>
<div class="t" style="left:494.7px;top:527.40px;font-size:10.8px;color:#606266;font-weight:normal;">9</div>
<div class="t" style="left:538.5px;top:527.40px;font-size:10.8px;color:#606266;font-weight:normal;">1000290715</div>
<div class="t" style="left:646.2px;top:527.40px;font-size:10.8px;color:#606266;font-weight:normal;">213</div>
<div class="t" style="left:736.3px;top:527.40px;font-size:10.8px;color:#606266;font-weight:normal;">86101414</div>
<div class="t" style="left:826.6px;top:527.40px;font-size:10.8px;color:#606266;font-weight:normal;">213_电</div>
<div class="t" style="left:916.2px;top:527.40px;font-size:10.8px;color:#606266;font-weight:normal;">电</div>
<div class="t" style="left:982px;top:527.40px;font-size:10.8px;color:#606266;font-weight:normal;">14</div>
<div class="t" style="left:1047.7px;top:527.40px;font-size:10.8px;color:#606266;font-weight:normal;">94</div>
<div class="t" style="left:1110.2px;top:527.40px;font-size:10.8px;color:#606266;font-weight:normal;">1</div>
<div class="t" style="left:1167.2px;top:527.40px;font-size:10.8px;color:#606266;font-weight:normal;">213</div>
<div class="t" style="left:1257px;top:527.40px;font-size:10.8px;color:#606266;font-weight:normal;">2024-06-25</div>
<div class="t" style="left:1383.1px;top:527.40px;font-size:10.8px;color:#606266;font-weight:normal;">2024-06-26 19:14:56</div>
<div class="t" style="left:1501.2px;width:70.8px;text-align:center;top:527.40px;font-size:10.8px;color:#606266">0.00</div>
<div class="t" style="left:494.7px;top:554.40px;font-size:10.8px;color:#606266;font-weight:normal;">10</div>
<div class="t" style="left:538.5px;top:554.40px;font-size:10.8px;color:#606266;font-weight:normal;">1000290716</div>
<div class="t" style="left:646.2px;top:554.40px;font-size:10.8px;color:#606266;font-weight:normal;">214</div>
<div class="t" style="left:736.3px;top:554.40px;font-size:10.8px;color:#606266;font-weight:normal;">86101414</div>
<div class="t" style="left:826.6px;top:554.40px;font-size:10.8px;color:#606266;font-weight:normal;">214_电</div>
<div class="t" style="left:916.2px;top:554.40px;font-size:10.8px;color:#606266;font-weight:normal;">电</div>
<div class="t" style="left:982px;top:554.40px;font-size:10.8px;color:#606266;font-weight:normal;">15</div>
<div class="t" style="left:1047.7px;top:554.40px;font-size:10.8px;color:#606266;font-weight:normal;">27</div>
<div class="t" style="left:1110.2px;top:554.40px;font-size:10.8px;color:#606266;font-weight:normal;">1</div>
<div class="t" style="left:1167.2px;top:554.40px;font-size:10.8px;color:#606266;font-weight:normal;">214</div>
<div class="t" style="left:1257px;top:554.40px;font-size:10.8px;color:#606266;font-weight:normal;">2024-06-25</div>
<div class="t" style="left:1383.1px;top:554.40px;font-size:10.8px;color:#606266;font-weight:normal;">2024-06-26 19:15:06</div>
<div class="t" style="left:1501.2px;width:70.8px;text-align:center;top:554.40px;font-size:10.8px;color:#606266">0.00</div>
<div class="t" style="left:494.7px;top:581.40px;font-size:10.8px;color:#606266;font-weight:normal;">11</div>
<div class="t" style="left:538.5px;top:581.40px;font-size:10.8px;color:#606266;font-weight:normal;">1000290719</div>
<div class="t" style="left:646.2px;top:581.40px;font-size:10.8px;color:#606266;font-weight:normal;">217</div>
<div class="t" style="left:736.3px;top:581.40px;font-size:10.8px;color:#606266;font-weight:normal;">86101414</div>
<div class="t" style="left:826.6px;top:581.40px;font-size:10.8px;color:#606266;font-weight:normal;">217_电</div>
<div class="t" style="left:916.2px;top:581.40px;font-size:10.8px;color:#606266;font-weight:normal;">电</div>
<div class="t" style="left:982px;top:581.40px;font-size:10.8px;color:#606266;font-weight:normal;">18</div>
<div class="t" style="left:1047.7px;top:581.40px;font-size:10.8px;color:#606266;font-weight:normal;">DD</div>
<div class="t" style="left:1110.2px;top:581.40px;font-size:10.8px;color:#606266;font-weight:normal;">1</div>
<div class="t" style="left:1167.2px;top:581.40px;font-size:10.8px;color:#606266;font-weight:normal;">217</div>
<div class="t" style="left:1257px;top:581.40px;font-size:10.8px;color:#606266;font-weight:normal;">2024-06-25</div>
<div class="t" style="left:1383.1px;top:581.40px;font-size:10.8px;color:#606266;font-weight:normal;">2024-06-26 19:15:11</div>
<div class="t" style="left:1501.2px;width:70.8px;text-align:center;top:581.40px;font-size:10.8px;color:#606266">0.00</div>
<div class="t" style="left:494.7px;top:608.40px;font-size:10.8px;color:#606266;font-weight:normal;">12</div>
<div class="t" style="left:538.5px;top:608.40px;font-size:10.8px;color:#606266;font-weight:normal;">1000290721</div>
<div class="t" style="left:646.2px;top:608.40px;font-size:10.8px;color:#606266;font-weight:normal;">219</div>
<div class="t" style="left:736.3px;top:608.40px;font-size:10.8px;color:#606266;font-weight:normal;">86101414</div>
<div class="t" style="left:826.6px;top:608.40px;font-size:10.8px;color:#606266;font-weight:normal;">219_电</div>
<div class="t" style="left:916.2px;top:608.40px;font-size:10.8px;color:#606266;font-weight:normal;">电</div>
<div class="t" style="left:982px;top:608.40px;font-size:10.8px;color:#606266;font-weight:normal;">20</div>
<div class="t" style="left:1047.7px;top:608.40px;font-size:10.8px;color:#606266;font-weight:normal;">86</div>
<div class="t" style="left:1110.2px;top:608.40px;font-size:10.8px;color:#606266;font-weight:normal;">1</div>
<div class="t" style="left:1167.2px;top:608.40px;font-size:10.8px;color:#606266;font-weight:normal;">219</div>
<div class="t" style="left:1257px;top:608.40px;font-size:10.8px;color:#606266;font-weight:normal;">2024-06-25</div>
<div class="t" style="left:1383.1px;top:608.40px;font-size:10.8px;color:#606266;font-weight:normal;">2024-06-26 19:15:21</div>
<div class="t" style="left:1501.2px;width:70.8px;text-align:center;top:608.40px;font-size:10.8px;color:#606266">0.46</div>
<div class="t" style="left:494.7px;top:635.40px;font-size:10.8px;color:#606266;font-weight:normal;">13</div>
<div class="t" style="left:538.5px;top:635.40px;font-size:10.8px;color:#606266;font-weight:normal;">1000290722</div>
<div class="t" style="left:646.2px;top:635.40px;font-size:10.8px;color:#606266;font-weight:normal;">220</div>
<div class="t" style="left:736.3px;top:635.40px;font-size:10.8px;color:#606266;font-weight:normal;">86101414</div>
<div class="t" style="left:826.6px;top:635.40px;font-size:10.8px;color:#606266;font-weight:normal;">220_电</div>
<div class="t" style="left:916.2px;top:635.40px;font-size:10.8px;color:#606266;font-weight:normal;">电</div>
<div class="t" style="left:982px;top:635.40px;font-size:10.8px;color:#606266;font-weight:normal;">21</div>
<div class="t" style="left:1047.7px;top:635.40px;font-size:10.8px;color:#606266;font-weight:normal;">F6</div>
<div class="t" style="left:1110.2px;top:635.40px;font-size:10.8px;color:#606266;font-weight:normal;">1</div>
<div class="t" style="left:1167.2px;top:635.40px;font-size:10.8px;color:#606266;font-weight:normal;">220</div>
<div class="t" style="left:1257px;top:635.40px;font-size:10.8px;color:#606266;font-weight:normal;">2024-06-25</div>
<div class="t" style="left:1383.1px;top:635.40px;font-size:10.8px;color:#606266;font-weight:normal;">2024-06-26 19:15:31</div>
<div class="t" style="left:1501.2px;width:70.8px;text-align:center;top:635.40px;font-size:10.8px;color:#606266">0.00</div>
<div class="t" style="left:494.7px;top:662.40px;font-size:10.8px;color:#606266;font-weight:normal;">14</div>
<div class="t" style="left:538.5px;top:662.40px;font-size:10.8px;color:#606266;font-weight:normal;">1000290723</div>
<div class="t" style="left:646.2px;top:662.40px;font-size:10.8px;color:#606266;font-weight:normal;">221</div>
<div class="t" style="left:736.3px;top:662.40px;font-size:10.8px;color:#606266;font-weight:normal;">86101414</div>
<div class="t" style="left:826.6px;top:662.40px;font-size:10.8px;color:#606266;font-weight:normal;">221_电</div>
<div class="t" style="left:916.2px;top:662.40px;font-size:10.8px;color:#606266;font-weight:normal;">电</div>
<div class="t" style="left:982px;top:662.40px;font-size:10.8px;color:#606266;font-weight:normal;">22</div>
<div class="t" style="left:1047.7px;top:662.40px;font-size:10.8px;color:#606266;font-weight:normal;">C3</div>
<div class="t" style="left:1110.2px;top:662.40px;font-size:10.8px;color:#606266;font-weight:normal;">1</div>
<div class="t" style="left:1167.2px;top:662.40px;font-size:10.8px;color:#606266;font-weight:normal;">221</div>
<div class="t" style="left:1257px;top:662.40px;font-size:10.8px;color:#606266;font-weight:normal;">2024-06-25</div>
<div class="t" style="left:1383.1px;top:662.40px;font-size:10.8px;color:#606266;font-weight:normal;">2024-06-26 19:15:37</div>
<div class="t" style="left:1501.2px;width:70.8px;text-align:center;top:662.40px;font-size:10.8px;color:#606266">0.00</div>
<div class="t" style="left:494.7px;top:689.40px;font-size:10.8px;color:#606266;font-weight:normal;">15</div>
<div class="t" style="left:538.5px;top:689.40px;font-size:10.8px;color:#606266;font-weight:normal;">1000290724</div>
<div class="t" style="left:646.2px;top:689.40px;font-size:10.8px;color:#606266;font-weight:normal;">222</div>
<div class="t" style="left:736.3px;top:689.40px;font-size:10.8px;color:#606266;font-weight:normal;">86101414</div>
<div class="t" style="left:826.6px;top:689.40px;font-size:10.8px;color:#606266;font-weight:normal;">222_电</div>
<div class="t" style="left:916.2px;top:689.40px;font-size:10.8px;color:#606266;font-weight:normal;">电</div>
<div class="t" style="left:982px;top:689.40px;font-size:10.8px;color:#606266;font-weight:normal;">23</div>
<div class="t" style="left:1047.7px;top:689.40px;font-size:10.8px;color:#606266;font-weight:normal;">14</div>
<div class="t" style="left:1110.2px;top:689.40px;font-size:10.8px;color:#606266;font-weight:normal;">1</div>
<div class="t" style="left:1167.2px;top:689.40px;font-size:10.8px;color:#606266;font-weight:normal;">222</div>
<div class="t" style="left:1257px;top:689.40px;font-size:10.8px;color:#606266;font-weight:normal;">2024-06-25</div>
<div class="t" style="left:1383.1px;top:689.40px;font-size:10.8px;color:#606266;font-weight:normal;">2024-06-26 19:15:47</div>
<div class="t" style="left:1501.2px;width:70.8px;text-align:center;top:689.40px;font-size:10.8px;color:#606266">0.00</div>
<div class="t" style="left:494.7px;top:716.40px;font-size:10.8px;color:#606266;font-weight:normal;">16</div>
<div class="t" style="left:538.5px;top:716.40px;font-size:10.8px;color:#606266;font-weight:normal;">1000290725</div>
<div class="t" style="left:646.2px;top:716.40px;font-size:10.8px;color:#606266;font-weight:normal;">223</div>
<div class="t" style="left:736.3px;top:716.40px;font-size:10.8px;color:#606266;font-weight:normal;">86101414</div>
<div class="t" style="left:826.6px;top:716.40px;font-size:10.8px;color:#606266;font-weight:normal;">223_电</div>
<div class="t" style="left:916.2px;top:716.40px;font-size:10.8px;color:#606266;font-weight:normal;">电</div>
<div class="t" style="left:982px;top:716.40px;font-size:10.8px;color:#606266;font-weight:normal;">24</div>
<div class="t" style="left:1047.7px;top:716.40px;font-size:10.8px;color:#606266;font-weight:normal;">D2</div>
<div class="t" style="left:1110.2px;top:716.40px;font-size:10.8px;color:#606266;font-weight:normal;">1</div>
<div class="t" style="left:1167.2px;top:716.40px;font-size:10.8px;color:#606266;font-weight:normal;">223</div>
<div class="t" style="left:1257px;top:716.40px;font-size:10.8px;color:#606266;font-weight:normal;">2024-06-25</div>
<div class="t" style="left:1383.1px;top:716.40px;font-size:10.8px;color:#606266;font-weight:normal;">2024-06-26 19:15:52</div>
<div class="t" style="left:1501.2px;width:70.8px;text-align:center;top:716.40px;font-size:10.8px;color:#606266">0.00</div>
<div class="t" style="left:494.7px;top:743.40px;font-size:10.8px;color:#606266;font-weight:normal;">17</div>
<div class="t" style="left:538.5px;top:743.40px;font-size:10.8px;color:#606266;font-weight:normal;">1000290726</div>
<div class="t" style="left:646.2px;top:743.40px;font-size:10.8px;color:#606266;font-weight:normal;">224</div>
<div class="t" style="left:736.3px;top:743.40px;font-size:10.8px;color:#606266;font-weight:normal;">86101414</div>
<div class="t" style="left:826.6px;top:743.40px;font-size:10.8px;color:#606266;font-weight:normal;">224_电</div>
<div class="t" style="left:916.2px;top:743.40px;font-size:10.8px;color:#606266;font-weight:normal;">电</div>
<div class="t" style="left:982px;top:743.40px;font-size:10.8px;color:#606266;font-weight:normal;">25</div>
<div class="t" style="left:1047.7px;top:743.40px;font-size:10.8px;color:#606266;font-weight:normal;">CB</div>
<div class="t" style="left:1110.2px;top:743.40px;font-size:10.8px;color:#606266;font-weight:normal;">1</div>
<div class="t" style="left:1167.2px;top:743.40px;font-size:10.8px;color:#606266;font-weight:normal;">224</div>
<div class="t" style="left:1257px;top:743.40px;font-size:10.8px;color:#606266;font-weight:normal;">2024-06-25</div>
<div class="t" style="left:1383.1px;top:743.40px;font-size:10.8px;color:#606266;font-weight:normal;">2024-06-26 19:16:02</div>
<div class="t" style="left:1501.2px;width:70.8px;text-align:center;top:743.40px;font-size:10.8px;color:#606266">0.00</div>
</body></html>
